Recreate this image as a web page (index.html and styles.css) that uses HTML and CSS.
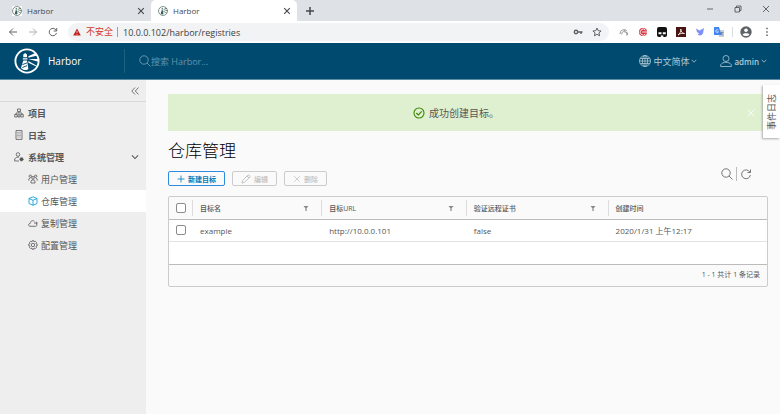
FILE: index.html
```html
<!DOCTYPE html>
<html lang="zh-CN">
<head>
    <meta charset="UTF-8">
    <meta name="viewport" content="width=device-width, initial-scale=1.0">
    <title>Harbor</title>
    <link rel="stylesheet" href="styles.css">
</head>
<body>
    <!-- Browser tabs -->
    <div class="tabs">
        <div class="tab">
            <svg class="favicon" viewBox="0 0 28 28"><use href="#harbor"/></svg>
            <span class="tab-title">Harbor</span>
            <button class="icon-button" aria-label="关闭标签页"><svg class="i8" viewBox="0 0 10 10"><use href="#cross"/></svg></button>
        </div>
        <div class="tab tab-active">
            <svg class="favicon" viewBox="0 0 28 28"><use href="#harbor"/></svg>
            <span class="tab-title">Harbor</span>
            <button class="icon-button" aria-label="关闭标签页"><svg class="i8" viewBox="0 0 10 10"><use href="#cross"/></svg></button>
        </div>
        <button class="icon-button tab-new" aria-label="新标签页"><svg class="i10" viewBox="0 0 10 10"><path d="M5 1v8M1 5h8" stroke-width="1.5"/></svg></button>
        <div class="window-buttons">
            <button class="icon-button" aria-label="最小化"><svg class="i8" viewBox="0 0 8 8"><path d="M1 4h6"/></svg></button>
            <button class="icon-button" aria-label="还原"><svg class="i8" viewBox="0 0 8 8"><path d="M1 2.5h4.500v4.500h-4.500zM2.500 2.500v-1.500h4.500v4.500h-1.500"/></svg></button>
            <button class="icon-button" aria-label="关闭"><svg class="i8" viewBox="0 0 8 8"><path d="M1 1l6 6M7 1l-6 6"/></svg></button>
        </div>
    </div>

    <!-- Address bar -->
    <div class="toolbar">
        <button class="icon-button" aria-label="后退"><svg class="i10" viewBox="0 0 10 10"><path d="M9 5H1.500M5 1.500L1.500 5L5 8.500"/></svg></button>
        <button class="icon-button faded" aria-label="前进"><svg class="i10" viewBox="0 0 10 10"><path d="M1 5h7.500M5 1.500L8.500 5L5 8.500"/></svg></button>
        <button class="icon-button" aria-label="刷新"><svg class="i10" viewBox="0 0 10 10"><path d="M8.300 3.500A3.700 3.700 0 1 0 8.500 6M8.700 1v3h-3"/></svg></button>
        <div class="address">
            <svg class="i8" viewBox="0 0 8 8"><path d="M4 .5L7.800 7.500H.200z" fill="#c5221f" stroke="none"/><path d="M4 3v2M4 6v.8" stroke="#fff" stroke-width=".7"/></svg>
            <span class="insecure">不安全</span>
            <input class="url" type="text" aria-label="网址" value="10.0.0.102/harbor/registries">
            <button class="icon-button" aria-label="密码"><svg class="i10" viewBox="0 0 10 10"><circle cx="3" cy="5" r="1.700" stroke-width="1.400"/><path d="M5 5h4.500M8 5v2" stroke-width="1.400"/></svg></button>
            <button class="icon-button star" aria-label="收藏"><svg class="i10" viewBox="0 0 10 10"><path d="M5 1l1.200 2.700 2.900.3-2.200 1.900.7 2.900L5 7.300 2.400 8.800l.7-2.900L.9 4l2.900-.3z"/></svg></button>
        </div>
        <div class="extensions">
            <svg class="i10" viewBox="0 0 10 10"><path d="M1 7a4 4 0 0 1 7-3M3 7.500a2 2 0 0 1 3-2.500M5 3l4 5M7 8a1.300 1.300 0 1 0 0-2.500" stroke="#999"/></svg>
            <svg class="i10" viewBox="0 0 10 10"><circle cx="5" cy="5" r="4" fill="#d93040" stroke="none"/><path d="M7.500 3.200A3 3 0 1 0 7.500 7M4 5h6" stroke="#fff" stroke-width=".9"/></svg>
            <svg class="i10" viewBox="0 0 10 10"><rect x="0" y="0" width="10" height="10" rx="2" fill="#111" stroke="none"/><path d="M1.500 5.200h3v2h-3zM5.800 5.200h3v2h-3zM3.800 8.500h2.500v1.500H3.800z" fill="#fff" stroke="none"/></svg>
            <svg class="i10" viewBox="0 0 10 10"><rect width="10" height="10" fill="#4a1410" stroke="none"/><path d="M2 8c2-1 3-4 2.800-6C5 5 6.500 6.500 8.500 6.500 6 6 4 6.500 2 8z" stroke="#fff" stroke-width=".8"/></svg>
            <svg class="i10" viewBox="0 0 10 10"><path d="M1 1.500l3.500 2L9 1 8 6.500 6 8.500 2.500 8l1.500-1.500L2 5z" fill="#7d92f7" stroke="none"/></svg>
            <svg class="i10" viewBox="0 0 10 10"><path d="M4 3h6v7H5z" fill="#c9ced6" stroke="none"/><path d="M0 0h5l2.500 8H0z" fill="#4285f4" stroke="none"/><path d="M4.300 3.200A1.400 1.400 0 1 0 4.400 4.800H3.200" stroke="#fff" stroke-width=".7"/><path d="M6.500 5.500h3M8 5c0 2-1 3-1 3M7 6l2 2.500" stroke="#667" stroke-width=".6"/></svg>
        </div>
        <svg class="i12" viewBox="0 0 12 12"><circle cx="6" cy="6" r="5.700" fill="#5f6368" stroke="none"/><circle cx="6" cy="4.300" r="1.800" fill="#fff" stroke="none"/><path d="M2.500 8.600c1-1.900 6-1.900 7 0-1.500 2-5.500 2-7 0z" fill="#fff" stroke="none"/></svg>
        <button class="icon-button" aria-label="菜单"><svg class="i10" viewBox="0 0 10 10"><path d="M5 .8v1.500M5 4.200v1.500M5 7.600v1.500" stroke-width="1.500"/></svg></button>
    </div>

    <!-- Harbor header -->
    <header class="header">
        <a href="#" class="brand">
            <svg class="logo" viewBox="0 0 28 28"><use href="#harbor"/></svg>
            <span>Harbor</span>
        </a>
        <label class="search">
            <svg class="i12" viewBox="0 0 12 12"><use href="#search"/></svg>
            <input type="text" placeholder="搜索 Harbor..." aria-label="搜索">
        </label>
        <button class="header-button language">
            <svg class="i12" viewBox="0 0 12 12"><circle cx="6" cy="6" r="5.500"/><ellipse cx="6" cy="6" rx="2.600" ry="5.500"/><path d="M6 .5v11M.5 6h11M1.300 3.500h9.400M1.300 8.500h9.400"/></svg>
            <span>中文简体</span>
            <svg class="caret" viewBox="0 0 6 6"><use href="#down"/></svg>
        </button>
        <button class="header-button">
            <svg class="i12" viewBox="0 0 12 12"><circle cx="6" cy="3.500" r="3"/><path d="M.7 11.500V9.700c2-3.200 8.600-3.200 10.600 0v1.800z"/></svg>
            <span class="user">admin</span>
            <svg class="caret" viewBox="0 0 6 6"><use href="#down"/></svg>
        </button>
    </header>

    <div class="page">
        <nav class="sidebar">
            <div class="collapse">
                <button class="icon-button" aria-label="收起"><svg class="i8" viewBox="0 0 8 8"><path d="M4 .5L.8 4L4 7.500M7.500 .5L4.300 4L7.500 7.500"/></svg></button>
            </div>
            <a href="#" class="nav-item nav-top">
                <svg class="i10" viewBox="0 0 10 10"><path d="M3.500 1h3v2.500h-3zM.7 6.500h2.500V9H.7zM6.800 6.500h2.500V9H6.800zM5 3.500V5M2 6.500V5h6v1.500M4 6.800h2V9H4z"/></svg>
                <span>项目</span>
            </a>
            <a href="#" class="nav-item nav-top">
                <svg class="i10" viewBox="0 0 10 10"><path d="M2 .6h6v8.800H2zM3.500 2.500h1M3.500 4h1M3.500 5.500h1M3.500 7h1M5.500 2.500h1M5.500 4h1M5.500 5.500h1M5.500 7h1"/></svg>
                <span>日志</span>
            </a>
            <a href="#" class="nav-item nav-top">
                <svg class="i10" viewBox="0 0 10 10"><circle cx="4" cy="2.500" r="1.800"/><path d="M5 9H.7V7c1-1.500 2.500-2 4.300-1.800"/><circle cx="7.500" cy="7.300" r="1.700" fill="#565656" stroke-dasharray="1 .5"/></svg>
                <span>系统管理</span>
                <svg class="i8 expand" viewBox="0 0 6 6"><use href="#down"/></svg>
            </a>
            <a href="#" class="nav-item nav-sub">
                <svg class="i10" viewBox="0 0 10 10"><circle cx="5" cy="3.800" r="1.300"/><circle cx="2.300" cy="2.200" r="1.200"/><circle cx="7.700" cy="2.200" r="1.200"/><path d="M3 9V7c.5-1.500 3.500-1.500 4 0v2zM.8 6.500V5l1.500-.8M9.200 6.500V5l-1.500-.8"/></svg>
                <span>用户管理</span>
            </a>
            <a href="#" class="nav-item nav-sub nav-active">
                <svg class="i10" viewBox="0 0 10 10"><path d="M5 .8L9 2.500v5L5 9.300 1 7.500v-5zM1 2.500l4 1.800 4-1.800M5 4.300v5"/></svg>
                <span>仓库管理</span>
            </a>
            <a href="#" class="nav-item nav-sub">
                <svg class="i10" viewBox="0 0 10 10"><path d="M8.500 5.500c1 2-.2 2.800-1 2.800H2C0 8 .2 5.600 2.200 5.500 2.500 2.500 5 2 6.500 3.500M6 5h3.200M8 3.800L9.300 5 8 6.200"/></svg>
                <span>复制管理</span>
            </a>
            <a href="#" class="nav-item nav-sub">
                <svg class="i10" viewBox="0 0 10 10"><path d="M4.200.7h1.600l.3 1.200 1.200-.6 1.200 1.200-.6 1.200 1.300.4v1.700l-1.300.4.6 1.200-1.200 1.200-1.200-.6-.3 1.300H4.200l-.3-1.300-1.200.6-1.200-1.200.6-1.200-1.300-.4V4.100l1.300-.4-.6-1.200 1.200-1.200 1.200.6z"/><circle cx="5" cy="5" r="1.700"/></svg>
                <span>配置管理</span>
            </a>
        </nav>

        <main class="content">
            <div class="alert" role="status">
                <svg class="i12" viewBox="0 0 12 12"><circle cx="6" cy="6" r="5"/><path d="M3.300 6l2 2 3.500-3.700"/></svg>
                <span>成功创建目标。</span>
                <button class="icon-button alert-close" aria-label="关闭"><svg class="i10" viewBox="0 0 10 10"><use href="#cross"/></svg></button>
            </div>
            <h1>仓库管理</h1>
            <div class="actions">
                <button class="action action-primary"><svg class="i8" viewBox="0 0 8 8"><path d="M4 .5v7M.5 4h7"/></svg>新建目标</button>
                <button class="action" disabled><svg class="i10" viewBox="0 0 10 10"><path d="M1 9l.6-2.500L7 1.100c.8-.6 2.500 1 1.900 1.900L3.500 8.400zM6 2l2 2"/></svg>编辑</button>
                <button class="action" disabled><svg class="i8" viewBox="0 0 10 10"><use href="#cross"/></svg>删除</button>
                <div class="tools">
                    <button class="icon-button" aria-label="搜索"><svg class="i12" viewBox="0 0 12 12"><use href="#search"/></svg></button>
                    <button class="icon-button refresh" aria-label="刷新"><svg class="i12" viewBox="0 0 12 12"><path d="M9.800 4A4.400 4.400 0 1 0 10.400 7M10.500 1.500v3h-3"/></svg></button>
                </div>
            </div>
            <div class="datagrid">
                <table>
                    <thead>
                        <tr>
                            <th class="col-check"><input type="checkbox" aria-label="全选"></th>
                            <th class="col-name"><div class="th">目标名<svg class="filter" viewBox="0 0 6 6"><use href="#funnel"/></svg></div></th>
                            <th class="col-url"><div class="th">目标URL<svg class="filter" viewBox="0 0 6 6"><use href="#funnel"/></svg></div></th>
                            <th class="col-cert"><div class="th">验证远程证书<svg class="filter" viewBox="0 0 6 6"><use href="#funnel"/></svg></div></th>
                            <th><div class="th">创建时间</div></th>
                        </tr>
                    </thead>
                    <tbody>
                        <tr>
                            <td class="col-check"><input type="checkbox" aria-label="选择 example"></td>
                            <td>example</td>
                            <td>http://10.0.0.101</td>
                            <td>false</td>
                            <td>2020/1/31 上午12:17</td>
                        </tr>
                    </tbody>
                </table>
                <div class="datagrid-space"></div>
                <div class="datagrid-footer">1 - 1 共计 1 条记录</div>
            </div>
        </main>
        <button class="events">事件日志</button>
    </div>

    <!-- Shared icons -->
    <svg class="symbols">
        <symbol id="harbor" viewBox="0 0 28 28">
            <circle cx="14" cy="14" r="12.500" fill="none" stroke="currentColor" stroke-width="2"/>
            <path d="M10 7l2-1.500L14 7v3h-4zM9.500 11h5v1.500h-5zM10 13.500h4l1.500 9c-3 2.500-6 1-8-1z" fill="currentColor" stroke="none"/>
            <path d="M15.500 9l8-4 1.500 3-9.500 2.500zM15.500 11.800h11v3zM15.500 14l9 5-.5 1-8.500-4z" fill="currentColor" stroke="none"/>
            <path d="M9 18l5-2M9 21l5-2" stroke="#004a70" stroke-width="1"/>
        </symbol>
        <symbol id="search" viewBox="0 0 12 12"><circle cx="5" cy="5" r="4.200"/><path d="M8 8l3.500 3.500"/></symbol>
        <symbol id="cross" viewBox="0 0 10 10"><path d="M1.500 1.500l7 7M8.500 1.500l-7 7"/></symbol>
        <symbol id="down" viewBox="0 0 6 6"><path d="M.7 1.800L3 4.200l2.300-2.400"/></symbol>
        <symbol id="funnel" viewBox="0 0 6 6"><path d="M.5 1h5L3.600 3.300V6H2.400V3.300z" fill="currentColor" stroke="none"/></symbol>
    </svg>
</body>
</html>
```
FILE: styles.css
```css
* { margin: 0; padding: 0; box-sizing: border-box; }

body {
    min-height: 100vh;
    display: flex;
    flex-direction: column;
    font-family: "Open Sans", "Noto Sans CJK SC", sans-serif;
    font-size: 9px;
    color: #565656;
    background: #fafafa;
}

button, input {
    font: inherit;
    color: inherit;
    border: none;
    background: none;
    outline: none;
}

a { color: inherit; text-decoration: none; }

svg {
    display: block;
    flex: none;
    fill: none;
    stroke: currentColor;
    stroke-width: 0.8;
}

.symbols { position: absolute; width: 0; height: 0; }
.i8 { width: 8px; height: 8px; }
.i10 { width: 10px; height: 10px; }
.i12 { width: 12px; height: 12px; }

.icon-button {
    display: flex;
    align-items: center;
    justify-content: center;
    flex: none;
}

/* Browser tabs */
.tabs {
    display: flex;
    align-items: stretch;
    height: 21px;
    padding-left: 5px;
    background: #dee1e6;
    color: #45494d;
}

.tab {
    width: 146px;
    display: flex;
    align-items: center;
    gap: 5px;
    padding: 0 6px 0 7px;
}

.tab svg { stroke-width: 1.4; }

.tab .favicon {
    width: 10px;
    height: 10px;
    background: #fff;
    color: #49695c;
}

.tab-active {
    background: #fff;
    border-radius: 5px 5px 0 0;
}

.tab-title { flex: 1; font-size: 8px; }
.tab-new { margin-left: 8px; }

.window-buttons {
    display: flex;
    gap: 20px;
    margin: 0 10px 4px auto;
}

/* Address bar */
.toolbar {
    display: flex;
    align-items: center;
    height: 22px;
    padding: 0 8px;
    gap: 10px;
    background: #fff;
    color: #5f6368;
}

.toolbar svg { stroke-width: 1; }
.faded { opacity: 0.5; }

.address {
    flex: 1;
    display: flex;
    align-items: center;
    height: 18px;
    padding: 0 7px 0 5px;
    border-radius: 9px;
    background: #f1f3f4;
}

.insecure {
    margin-left: 5px;
    padding-right: 4px;
    line-height: 10px;
    border-right: 1px solid #9aa0a6;
    color: #d33b30;
}

.url {
    flex: 1;
    min-width: 0;
    padding-left: 5px;
    color: #3c4043;
}

.star { margin-left: 9px; }

.extensions {
    display: flex;
    gap: 9px;
    padding-right: 8px;
    margin-right: -3px;
    border-right: 1px solid #dadce0;
}

/* Harbor header */
.header {
    display: flex;
    align-items: center;
    height: 37px;
    padding-right: 13px;
    background: #004a70;
    border-bottom: 1px solid #5c8aa3;
    color: #b3c9d4;
}

.brand {
    display: flex;
    align-items: center;
    gap: 8px;
    width: 124px;
    padding-left: 14px;
    font-size: 10px;
    color: #fff;
}

.logo { width: 26px; height: 26px; }

.search {
    flex: 1;
    display: flex;
    align-items: center;
    height: 24px;
    padding-left: 14px;
    border-left: 1px solid #1f6080;
    color: #7fa4b7;
}

.search input {
    flex: 1;
    min-width: 0;
}

.search input::placeholder { color: #6592aa; }

.header-button {
    display: flex;
    align-items: center;
    gap: 2px;
}

.language { margin-right: 23px; }
.user { font-size: 8px; font-weight: 600; }
.caret { width: 6px; height: 6px; }

/* Sidebar */
.page {
    flex: 1;
    display: flex;
    position: relative;
}

.sidebar {
    width: 146px;
    flex: none;
    background: #eee;
}

.collapse {
    display: flex;
    justify-content: flex-end;
    height: 22px;
    padding-right: 7px;
    border-bottom: 1px solid #d8d8d8;
}

.nav-item {
    display: flex;
    align-items: center;
    gap: 3px;
    height: 22px;
    padding-right: 7px;
}

.nav-top {
    gap: 4px;
    padding-left: 14px;
    font-weight: bold;
}

.nav-sub { padding-left: 28px; }
.nav-active { background: #fff; }
.nav-active svg { color: #0095d3; }
.expand { margin-left: auto; }

/* Content */
.content {
    flex: 1;
    min-width: 0;
    padding: 14px 12px 14px 22px;
}

.alert {
    display: flex;
    align-items: center;
    justify-content: center;
    gap: 4px;
    height: 37px;
    padding-right: 24px;
    position: relative;
    background: #dff0d0;
}

.alert span { font-size: 10px; }
.alert > svg { color: #3c8500; stroke-width: 1.1; }

.alert-close {
    position: absolute;
    right: 12px;
    color: #fff;
}

h1 {
    margin-top: 6px;
    font-size: 17px;
    font-weight: 300;
    line-height: 28px;
    color: #000;
}

.actions {
    display: flex;
    align-items: flex-end;
    gap: 7px;
    margin-top: 2px;
}

.action {
    display: flex;
    align-items: center;
    gap: 3px;
    height: 15px;
    padding: 0 8px;
    border: 1px solid #ccc;
    border-radius: 2px;
    font-size: 7px;
    color: #b5b5b5;
}

.action-primary {
    border-color: #2f8ae0;
    color: #0079b8;
    font-weight: bold;
}

.tools {
    display: flex;
    gap: 3px;
    height: 14px;
    margin: 0 16px 5px auto;
}

.refresh {
    padding-left: 3px;
    border-left: 1px solid #bbb;
}

/* Datagrid */
.datagrid {
    margin-top: 10px;
    border: 1px solid #ccc;
    border-radius: 2px;
    background: #fafafa;
}

table {
    width: 100%;
    table-layout: fixed;
    border-collapse: collapse;
}

th, td {
    height: 22px;
    padding-left: 8px;
    text-align: left;
}

th {
    border-bottom: 1px solid #bbb;
    font-size: 7px;
    font-weight: 500;
}

.th {
    display: flex;
    align-items: center;
    justify-content: space-between;
    height: 16px;
    margin-left: -8px;
    padding: 0 12px 0 7px;
    border-left: 1px solid #ddd;
}

td {
    background: #fff;
    border-bottom: 1px solid #e2e2e2;
    font-size: 8px;
}

.col-check { width: 23px; padding-left: 7px; }
.col-name { width: 21.6%; }
.col-url { width: 24.2%; }
.col-cert { width: 23.7%; }

input[type="checkbox"] {
    display: block;
    appearance: none;
    width: 10px;
    height: 10px;
    border: 1px solid #8c8c8c;
    border-radius: 2px;
    background: #fff;
}

.filter { width: 6px; height: 6px; color: #888; }

.datagrid-space {
    height: 22px;
    background: #fff;
}

.datagrid-footer {
    height: 22px;
    padding-right: 7px;
    border-top: 1px solid #bbb;
    font-size: 7px;
    line-height: 20px;
    text-align: right;
}

/* Event log tab */
.events {
    position: absolute;
    top: 5px;
    right: 0;
    width: 17px;
    height: 53px;
    background: #fff;
    box-shadow: 1px -1px 2px #aaa;
    writing-mode: vertical-rl;
    text-orientation: sideways;
    transform: rotate(180deg);
}
```
